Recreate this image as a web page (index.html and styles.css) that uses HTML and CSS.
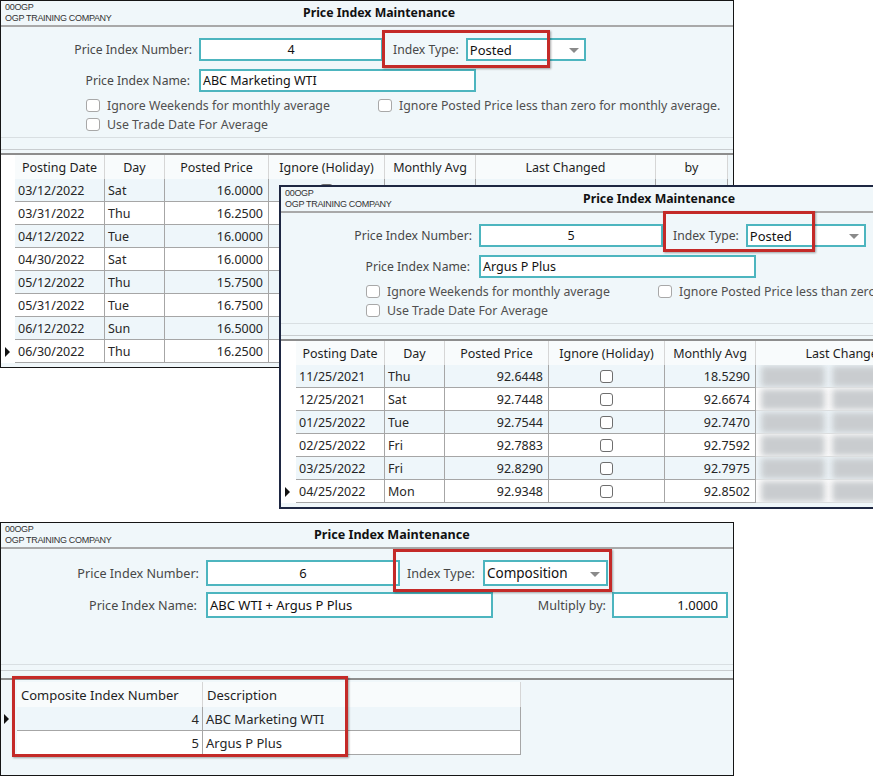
FILE: index.html
```html
<!DOCTYPE html>
<html>
<head>
<meta charset="utf-8">
<title>Price Index Maintenance</title>
<link rel="stylesheet" href="styles.css">
</head>
<body>

<section class="win w1">
  <header class="head">
    <div class="co"><div>00OGP</div><div>OGP TRAINING COMPANY</div></div>
    <h1 class="title">Price Index Maintenance</h1>
  </header>
  <div class="form">
    <div class="frow">
      <span class="lbl l-num">Price Index Number:</span>
      <span class="inp num i-num">4</span>
      <span class="lbl l-type">Index Type:</span>
      <span class="inp combo">Posted<i class="arrow"></i></span>
    </div>
    <div class="frow r2">
      <span class="lbl l-name">Price Index Name:</span>
      <span class="inp i-name">ABC Marketing WTI</span>
    </div>
    <div class="checks">
      <label class="chk"><i class="box"></i>Ignore Weekends for monthly average</label>
      <label class="chk"><i class="box"></i>Ignore Posted Price less than zero for monthly average.</label>
      <label class="chk"><i class="box"></i>Use Trade Date For Average</label>
    </div>
  </div>
  <div class="split"></div>
  <div class="split2"></div>
  <div class="grid g-posted">
    <div class="row hd"><span class="ind"></span><span>Posting Date</span><span>Day</span><span>Posted Price</span><span>Ignore (Holiday)</span><span>Monthly Avg</span><span>Last Changed</span><span>by</span></div>
    <div class="row alt"><span class="ind"></span><span>03/12/2022</span><span>Sat</span><span class="r">16.0000</span><span class="ctr"><i class="box g"></i></span><span></span><span></span><span></span></div>
    <div class="row"><span class="ind"></span><span>03/31/2022</span><span>Thu</span><span class="r">16.2500</span><span class="ctr"><i class="box g"></i></span><span></span><span></span><span></span></div>
    <div class="row alt"><span class="ind"></span><span>04/12/2022</span><span>Tue</span><span class="r">16.0000</span><span class="ctr"><i class="box g"></i></span><span></span><span></span><span></span></div>
    <div class="row"><span class="ind"></span><span>04/30/2022</span><span>Sat</span><span class="r">16.0000</span><span class="ctr"><i class="box g"></i></span><span></span><span></span><span></span></div>
    <div class="row alt"><span class="ind"></span><span>05/12/2022</span><span>Thu</span><span class="r">15.7500</span><span class="ctr"><i class="box g"></i></span><span></span><span></span><span></span></div>
    <div class="row"><span class="ind"></span><span>05/31/2022</span><span>Tue</span><span class="r">16.7500</span><span class="ctr"><i class="box g"></i></span><span></span><span></span><span></span></div>
    <div class="row alt"><span class="ind"></span><span>06/12/2022</span><span>Sun</span><span class="r">16.5000</span><span class="ctr"><i class="box g"></i></span><span></span><span></span><span></span></div>
    <div class="row"><span class="ind"><i class="tri"></i></span><span>06/30/2022</span><span>Thu</span><span class="r">16.2500</span><span class="ctr"><i class="box g"></i></span><span></span><span></span><span></span></div>
  </div>
  <div class="hl hl1"></div>
</section>

<section class="win w2">
  <header class="head">
    <div class="co"><div>00OGP</div><div>OGP TRAINING COMPANY</div></div>
    <h1 class="title">Price Index Maintenance</h1>
  </header>
  <div class="form">
    <div class="frow">
      <span class="lbl l-num">Price Index Number:</span>
      <span class="inp num i-num">5</span>
      <span class="lbl l-type">Index Type:</span>
      <span class="inp combo">Posted<i class="arrow"></i></span>
    </div>
    <div class="frow r2">
      <span class="lbl l-name">Price Index Name:</span>
      <span class="inp i-name">Argus P Plus</span>
    </div>
    <div class="checks">
      <label class="chk"><i class="box"></i>Ignore Weekends for monthly average</label>
      <label class="chk"><i class="box"></i>Ignore Posted Price less than zero for monthly average.</label>
      <label class="chk"><i class="box"></i>Use Trade Date For Average</label>
    </div>
  </div>
  <div class="split"></div>
  <div class="split2"></div>
  <div class="grid g-posted g2">
    <div class="row hd"><span class="ind"></span><span>Posting Date</span><span>Day</span><span>Posted Price</span><span>Ignore (Holiday)</span><span>Monthly Avg</span><span>Last Changed</span></div>
    <div class="row alt"><span class="ind"></span><span>11/25/2021</span><span>Thu</span><span class="r">92.6448</span><span class="ctr"><i class="box g"></i></span><span class="r">18.5290</span><span class="lc"><i class="bl a"></i><i class="bl b"></i></span></div>
    <div class="row"><span class="ind"></span><span>12/25/2021</span><span>Sat</span><span class="r">92.7448</span><span class="ctr"><i class="box g"></i></span><span class="r">92.6674</span><span class="lc"><i class="bl a"></i><i class="bl b"></i></span></div>
    <div class="row alt"><span class="ind"></span><span>01/25/2022</span><span>Tue</span><span class="r">92.7544</span><span class="ctr"><i class="box g"></i></span><span class="r">92.7470</span><span class="lc"><i class="bl a"></i><i class="bl b"></i></span></div>
    <div class="row"><span class="ind"></span><span>02/25/2022</span><span>Fri</span><span class="r">92.7883</span><span class="ctr"><i class="box g"></i></span><span class="r">92.7592</span><span class="lc"><i class="bl a"></i><i class="bl b"></i></span></div>
    <div class="row alt"><span class="ind"></span><span>03/25/2022</span><span>Fri</span><span class="r">92.8290</span><span class="ctr"><i class="box g"></i></span><span class="r">92.7975</span><span class="lc"><i class="bl a"></i><i class="bl b"></i></span></div>
    <div class="row"><span class="ind"><i class="tri"></i></span><span>04/25/2022</span><span>Mon</span><span class="r">92.9348</span><span class="ctr"><i class="box g"></i></span><span class="r">92.8502</span><span class="lc"><i class="bl a"></i><i class="bl b"></i></span></div>
  </div>
  <div class="hl hl2"></div>
</section>

<section class="win w3">
  <header class="head">
    <div class="co"><div>00OGP</div><div>OGP TRAINING COMPANY</div></div>
    <h1 class="title">Price Index Maintenance</h1>
  </header>
  <div class="form">
    <div class="frow">
      <span class="lbl l-num">Price Index Number:</span>
      <span class="inp num i-num">6</span>
      <span class="lbl l-type">Index Type:</span>
      <span class="inp combo">Composition<i class="arrow"></i></span>
    </div>
    <div class="frow r2">
      <span class="lbl l-name">Price Index Name:</span>
      <span class="inp i-name">ABC WTI + Argus P Plus</span>
      <span class="lbl l-mult">Multiply by:</span>
      <span class="inp i-mult">1.0000</span>
    </div>
  </div>
  <div class="split"></div>
  <div class="split2"></div>
  <div class="grid g-comp">
    <div class="row hd"><span class="ind"></span><span>Composite Index Number</span><span>Description</span></div>
    <div class="row alt"><span class="ind"><i class="tri"></i></span><span class="r">4</span><span>ABC Marketing WTI</span></div>
    <div class="row"><span class="ind"></span><span class="r">5</span><span>Argus P Plus</span></div>
  </div>
  <div class="hl hl3"></div>
  <div class="hl hl4"></div>
</section>

</body>
</html>
```

FILE: styles.css
```css
* { box-sizing: border-box; margin: 0; padding: 0; }
html, body { width: 873px; height: 776px; overflow: hidden; background: #ffffff; }
body {
  position: relative;
  font-family: "Noto Sans", "Open Sans", sans-serif;
  font-size: 12.5px;
  color: #222;
}

/* windows on the desktop */
.win {
  position: absolute;
  background: #f0f7fa;
  overflow: hidden;
  display: flex;
  flex-direction: column;
}
.w1 { left: 0; top: 0; width: 734px; height: 368px; border: 1px solid #151515; }
.w2 { left: 279px; top: 185px; width: 640px; height: 324px; border: 2px solid #1e2742; }
.w3 { left: 0; top: 522px; width: 734px; height: 254px; border: 1px solid #151515; font-size: 13px; }

/* title header */
.head {
  flex: none;
  height: 26px;
  border-bottom: 2px solid #a9a9a9;
  display: flex;
}
.co {
  width: 302px;
  flex: none;
  padding: 1px 0 0 4px;
  font-family: "Liberation Sans", Arial, sans-serif;
  font-size: 9px;
  line-height: 11px;
  letter-spacing: -0.3px;
  color: #333;
}
.title {
  font-size: 12.3px;
  font-weight: 700;
  line-height: 18px;
  padding-top: 3px;
  color: #111;
}
.w3 .co { width: 313px; }
.w3 .title { font-size: 12.6px; }

/* form */
.form {
  flex: none;
  height: 111px;
  padding-top: 11px;
  border-bottom: 1px solid #d9dfe2;
}
.frow { display: flex; align-items: center; height: 23px; }
.frow.r2 { margin-top: 8px; }
.lbl { flex: none; text-align: right; color: #474747; white-space: nowrap; font-size: 12.2px; }
.l-num { width: 191px; margin-right: 7px; }
.l-name { width: 189px; margin-right: 9px; }
.l-type { margin-left: 10px; margin-right: 7px; }

.inp {
  flex: none;
  height: 23px;
  border: 2px solid #4db5bf;
  background: #fff;
  color: #111;
  display: flex;
  align-items: center;
  padding: 0 2px;
  white-space: nowrap;
  overflow: hidden;
}
.num { justify-content: center; }
.i-num { width: 184px; }
.i-name { width: 277px; }
.combo { width: 120px; position: relative; font-size: 13px; }
.arrow {
  position: absolute;
  right: 5px;
  top: 8px;
  width: 0; height: 0;
  border-left: 5px solid transparent;
  border-right: 5px solid transparent;
  border-top: 5px solid #8a8a8a;
}

.checks {
  display: grid;
  grid-template-columns: 292px auto;
  padding-left: 85px;
  margin-top: 4px;
}
.chk {
  display: flex;
  align-items: center;
  gap: 7px;
  height: 19px;
  color: #505050;
  white-space: nowrap;
  font-size: 12.35px;
}
.box {
  display: block;
  flex: none;
  width: 14px;
  height: 13px;
  border: 1.5px solid #a8a8a8;
  border-radius: 3px;
  background: #fff;
}
.box.g { width: 13px; border: 1px solid #6e6e6e; }

/* splitter */
.split { flex: none; height: 12px; border-bottom: 1px solid #c9cdd0; }
.split2 { flex: none; height: 5px; border-bottom: 2px solid #8d8d8d; }

/* grids */
.grid {
  flex: none;
  display: grid;
  grid-template-rows: 24px;
  grid-auto-rows: 23px;
  align-content: start;
}
.g-posted { grid-template-columns: 14px 90px 60px 104px 116px 91px 180px 72px; }
.g2 { grid-template-columns: 15px 89px 60px 104px 116px 91px 180px; }
.g-comp { grid-template-columns: 16px 186px 318px; grid-template-rows: 25px; grid-auto-rows: 24px; }

.row { display: contents; }
.row > span {
  display: flex;
  align-items: center;
  padding: 0 3px;
  white-space: nowrap;
  overflow: hidden;
  background: #fff;
  color: #262626;
  border-right: 1px solid #a6a6a6;
  border-bottom: 1px solid #a6a6a6;
}
.row.alt > span { background: #eef6fa; }
.row > span.ind {
  background: #fff;
  border: 0;
  padding: 0 0 0 4px;
}
.g-comp .row > span.ind { background: #f0f7fa; padding-left: 3px; }
.row.hd > span {
  background: #f8fbfc;
  border-bottom: 0;
  border-right-color: #d6d6d6;
  justify-content: center;
  color: #1e1e1e;
}
.row.hd > span.ind { background: #fff; }
.g-comp .row.hd > span { justify-content: flex-start; padding-left: 4px; }
.g-comp .row.hd > span.ind { background: #f0f7fa; }
.row > span.r { justify-content: flex-end; padding-right: 5px; }
.g-comp .row > span.r { padding-right: 3px; }
.row > span.ctr { justify-content: center; }

.tri {
  display: block;
  width: 0; height: 0;
  border-top: 5px solid transparent;
  border-bottom: 5px solid transparent;
  border-left: 5px solid #111;
}

/* blurred "Last Changed" values */
.row > span.lc { padding: 0; position: relative; border-bottom-color: #dcdedf; }
.bl {
  position: absolute;
  top: 1px;
  height: 21px;
  background: #c9cccf;
  filter: blur(3px);
}
.bl.a { left: 5px; width: 64px; }
.bl.b { left: 76px; width: 76px; }

/* window 3 form */
.w3 .form { height: 116px; padding-top: 11px; }
.w3 .frow { height: 26px; }
.w3 .frow.r2 { margin-top: 6px; }
.w3 .inp { height: 26px; }
.w3 .lbl { font-size: 12.6px; }
.w3 .l-num { width: 198px; margin-right: 7px; }
.w3 .l-name { width: 196px; margin-right: 9px; }
.w3 .i-num { width: 194px; }
.w3 .l-type { margin-left: 7px; margin-right: 8px; }
.w3 .combo { width: 125px; font-size: 13.5px; }
.w3 .arrow { top: 10px; right: 6px; }
.w3 .i-name { width: 287px; }
.w3 .l-mult { width: 113px; margin-right: 6px; }
.w3 .i-mult { width: 116px; justify-content: flex-end; padding-right: 8px; }
.w3 .split { height: 6px; border-bottom: 1px solid #c9cdd0; }
.w3 .split2 { height: 9px; border-bottom: 2px solid #8d8d8d; }
.w3 .grid { margin-top: 2px; }

/* red highlight annotations */
.hl {
  position: absolute;
  border: 3px solid #c42a28;
  box-shadow: 1px 1px 2px rgba(0, 0, 0, 0.35);
}
.hl1 { left: 381px; top: 29px; width: 168px; height: 38px; }
.hl2 { left: 382px; top: 24px; width: 152px; height: 41px; }
.hl3 { left: 392px; top: 26px; width: 219px; height: 43px; }
.hl4 { left: 11px; top: 153px; width: 336px; height: 81px; }
```
